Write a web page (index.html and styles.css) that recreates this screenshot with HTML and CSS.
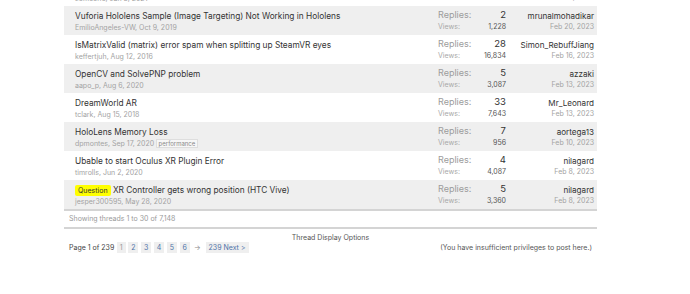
FILE: index.html
```html
<!DOCTYPE html>
<html lang="en">
<head>
    <meta charset="UTF-8">
    <title>Unity Forum - AR/VR threads</title>
    <link rel="stylesheet" href="styles.css">
</head>
<body>
    <div class="forum">
        <ol class="threads">
            <li class="thread">
                <div class="main">
                    <a class="title" href="#">Oculus Quest hand tracking not detected</a>
                    <div class="meta">someone, Jan 3, 2021</div>
                </div>
                <div class="stats">
                    <div class="replies"><span>Replies:</span><b>3</b></div>
                    <div class="views"><span>Views:</span><b>981</b></div>
                </div>
                <div class="last">
                    <a class="user" href="#">someone</a>
                    <div class="date">Feb 21, 2023</div>
                </div>
            </li>
            <li class="thread">
                <div class="main">
                    <a class="title" href="#">Vuforia Hololens Sample (Image Targeting) Not Working in Hololens</a>
                    <div class="meta">EmilioAngeles-VW, Oct 9, 2019</div>
                </div>
                <div class="stats">
                    <div class="replies"><span>Replies:</span><b>2</b></div>
                    <div class="views"><span>Views:</span><b>1,228</b></div>
                </div>
                <div class="last">
                    <a class="user" href="#">mrunalmohadikar</a>
                    <div class="date">Feb 20, 2023</div>
                </div>
            </li>
            <li class="thread">
                <div class="main">
                    <a class="title" href="#">IsMatrixValid (matrix) error spam when splitting up SteamVR eyes</a>
                    <div class="meta">keffertjuh, Aug 12, 2016</div>
                </div>
                <div class="stats">
                    <div class="replies"><span>Replies:</span><b>28</b></div>
                    <div class="views"><span>Views:</span><b>16,834</b></div>
                </div>
                <div class="last">
                    <a class="user" href="#">Simon_RebuffJiang</a>
                    <div class="date">Feb 16, 2023</div>
                </div>
            </li>
            <li class="thread">
                <div class="main">
                    <a class="title" href="#">OpenCV and SolvePNP problem</a>
                    <div class="meta">aapo_p, Aug 6, 2020</div>
                </div>
                <div class="stats">
                    <div class="replies"><span>Replies:</span><b>5</b></div>
                    <div class="views"><span>Views:</span><b>3,087</b></div>
                </div>
                <div class="last">
                    <a class="user" href="#">azzaki</a>
                    <div class="date">Feb 13, 2023</div>
                </div>
            </li>
            <li class="thread">
                <div class="main">
                    <a class="title" href="#">DreamWorld AR</a>
                    <div class="meta">tclark, Aug 15, 2018</div>
                </div>
                <div class="stats">
                    <div class="replies"><span>Replies:</span><b>33</b></div>
                    <div class="views"><span>Views:</span><b>7,643</b></div>
                </div>
                <div class="last">
                    <a class="user" href="#">Mr_Leonard</a>
                    <div class="date">Feb 13, 2023</div>
                </div>
            </li>
            <li class="thread">
                <div class="main">
                    <a class="title" href="#">HoloLens Memory Loss</a>
                    <div class="meta">dpmontes, Sep 17, 2020 <span class="tag">performance</span></div>
                </div>
                <div class="stats">
                    <div class="replies"><span>Replies:</span><b>7</b></div>
                    <div class="views"><span>Views:</span><b>956</b></div>
                </div>
                <div class="last">
                    <a class="user" href="#">aortega13</a>
                    <div class="date">Feb 10, 2023</div>
                </div>
            </li>
            <li class="thread">
                <div class="main">
                    <a class="title" href="#">Ubable to start Oculus XR Plugin Error</a>
                    <div class="meta">timrolls, Jun 2, 2020</div>
                </div>
                <div class="stats">
                    <div class="replies"><span>Replies:</span><b>4</b></div>
                    <div class="views"><span>Views:</span><b>4,087</b></div>
                </div>
                <div class="last">
                    <a class="user" href="#">nilagard</a>
                    <div class="date">Feb 8, 2023</div>
                </div>
            </li>
            <li class="thread">
                <div class="main">
                    <div class="title"><span class="prefix">Question</span> <a href="#">XR Controller gets wrong position (HTC Vive)</a></div>
                    <div class="meta">jesper300595, May 28, 2020</div>
                </div>
                <div class="stats">
                    <div class="replies"><span>Replies:</span><b>5</b></div>
                    <div class="views"><span>Views:</span><b>3,360</b></div>
                </div>
                <div class="last">
                    <a class="user" href="#">nilagard</a>
                    <div class="date">Feb 8, 2023</div>
                </div>
            </li>
        </ol>

        <div class="counter">Showing threads 1 to 30 of 7,148</div>

        <div class="footer">
            <div class="pagenav">
                <span class="pageof">Page 1 of 239</span>
                <a class="current">1</a>
                <a href="#">2</a>
                <a href="#">3</a>
                <a href="#">4</a>
                <a href="#">5</a>
                <a href="#">6</a>
                <span class="skip">&rarr;</span>
                <a class="last-page" href="#">239 Next &gt;</a>
            </div>
            <div class="options">Thread Display Options</div>
            <div class="note">(You have insufficient privileges to post here.)</div>
        </div>
    </div>
</body>
</html>
```

FILE: styles.css
```css
body {
    font-family: Inter, "Noto Sans", sans-serif;
    margin: 0;
    background-color: white;
    overflow: hidden;
}
a {
    text-decoration: none;
    color: inherit;
}
.forum {
    width: 533px;
    margin-left: 64px;
}
.threads {
    list-style: none;
    margin: -23px 0 0 0;
    padding: 0;
    border-bottom: 2px solid #d4d4d4;
}
.thread {
    display: flex;
    height: 29px;
    background-color: white;
}
.thread:nth-child(even) {
    background-color: #efefef;
}
.main {
    flex: 1;
    padding: 4px 0 0 11px;
}
.title {
    display: block;
    font-size: 8.3px;
    line-height: 13px;
    color: #333;
    white-space: nowrap;
}
.meta {
    font-size: 7px;
    line-height: 10px;
    color: #a3a3a3;
}
.prefix {
    background-color: #ffff00;
    color: #333;
    font-size: 7px;
    padding: 1px 3px;
    border-radius: 2px;
}
.tag {
    font-size: 6px;
    color: #8a8a8a;
    border: 1px solid #dedede;
    background-color: #f7f7f7;
    padding: 0 1.5px;
}
.stats {
    width: 68px;
    padding-top: 3px;
}
.stats div {
    display: flex;
    justify-content: space-between;
}
.stats b {
    font-weight: normal;
    color: #333;
}
.replies {
    font-size: 9px;
    line-height: 12px;
    color: #9c9c9c;
}
.views {
    font-size: 7px;
    line-height: 12px;
    color: #a8a8a8;
}
.views b {
    color: #555;
}
.replies b {
    font-size: 9.5px;
}
.last {
    width: 88px;
    padding: 4px 3px 0 0;
    text-align: right;
}
.user {
    display: block;
    font-size: 8.1px;
    line-height: 12px;
    color: #333;
}
.date {
    font-size: 7px;
    line-height: 10px;
    color: #a3a3a3;
}
.counter {
    font-size: 7px;
    color: #9a9a9a;
    padding: 2px 5px;
    line-height: 12px;
    border-bottom: 2px solid #d4d4d4;
}
.footer {
    display: grid;
    grid-template-columns: 1fr auto 1fr;
    padding-top: 4px;
}
.pagenav {
    padding: 9px 0 0 5px;
    font-size: 7px;
    color: #444;
    display: flex;
    align-items: center;
    gap: 2.5px;
}
.pagenav a {
    background-color: #efefef;
    color: #4f74aa;
    padding: 1px 3px;
    line-height: 9px;
}
.pagenav .current {
    color: #999;
}
.skip {
    color: #888;
    padding: 0 1.5px;
}
.last-page {
    margin-left: 1px;
}
.options {
    font-size: 7px;
    color: #555;
}
.note {
    font-size: 7px;
    color: #555;
    text-align: right;
    padding: 10px 5px 0 0;
}
```
